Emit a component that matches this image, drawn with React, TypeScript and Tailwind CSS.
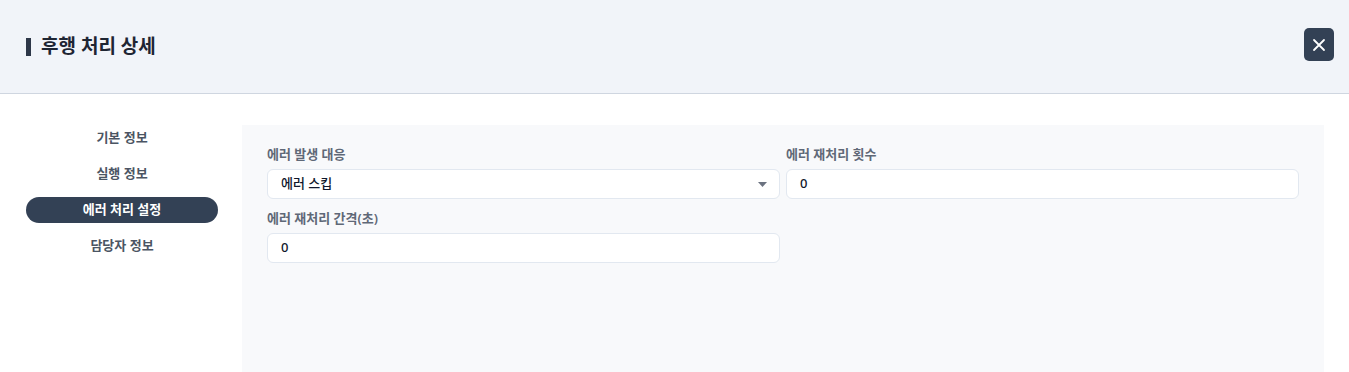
import React from "react";

const menu = ["기본 정보", "실행 정보", "에러 처리 설정", "담당자 정보"];

function Field({
  label,
  children,
}: {
  label: string;
  children: React.ReactNode;
}) {
  return (
    <div className="flex flex-col">
      <label className="text-[13px] leading-[18px] font-semibold text-[#5f6877] mb-[6px]">
        {label}
      </label>
      {children}
    </div>
  );
}

function TextBox({ value }: { value: string }) {
  return (
    <div className="h-[30px] rounded-md border border-slate-200 bg-white px-[13px] flex items-center text-[13px] font-medium text-slate-900">
      {value}
    </div>
  );
}

export default function App() {
  const active = 2;
  return (
    <div
      className="w-[1349px] h-[372px] overflow-hidden bg-white"
      style={{ fontFamily: '"Noto Sans", "Noto Sans CJK KR", sans-serif' }}
    >
      <div className="h-[94px] bg-[#f1f4f9] border-b border-[#cfd6e0] flex items-center justify-between pl-[26px] pr-[15px]">
        <div className="flex items-center gap-[10px]">
          <span className="w-[5px] h-[18px] bg-[#2d3748]" />
          <h1 className="text-[19px] font-semibold text-[#1e2533] leading-none">
            후행 처리 상세
          </h1>
        </div>
        <button
          type="button"
          className="w-[30px] h-[33px] mb-[4px] rounded-[5px] bg-[#334155] flex items-center justify-center text-white"
        >
          <svg width="14" height="14" viewBox="0 0 14 14" fill="none">
            <path
              d="M2 2L12 12M12 2L2 12"
              stroke="currentColor"
              strokeWidth="1.8"
              strokeLinecap="round"
            />
          </svg>
        </button>
      </div>

      <div className="flex gap-[24px] pl-[26px] pr-[25px] pt-[31px]">
        <nav className="w-[192px] shrink-0 flex flex-col gap-[10px]">
          {menu.map((m, i) => (
            <div
              key={m}
              className={
                i === active
                  ? "h-[26px] rounded-full bg-[#334155] text-white font-bold text-[13px] flex items-center justify-center"
                  : "h-[26px] text-[#4b5563] font-semibold text-[13px] flex items-center justify-center"
              }
            >
              {m}
            </div>
          ))}
        </nav>

        <div className="flex-1 h-[260px] bg-[#f8f9fb] px-[25px] pt-[20px]">
          <div className="grid grid-cols-2 gap-x-[6px] gap-y-[10px]">
            <Field label="에러 발생 대응">
              <div className="h-[30px] rounded-md border border-slate-200 bg-white pl-[13px] pr-[12px] flex items-center justify-between text-[13px] font-medium text-slate-900">
                <span>에러 스킵</span>
                <svg width="9" height="5" viewBox="0 0 9 5">
                  <path d="M0 0H9L4.5 5Z" fill="#6b7280" />
                </svg>
              </div>
            </Field>
            <Field label="에러 재처리 횟수">
              <TextBox value="0" />
            </Field>
            <Field label="에러 재처리 간격(초)">
              <TextBox value="0" />
            </Field>
          </div>
        </div>
      </div>
    </div>
  );
}
